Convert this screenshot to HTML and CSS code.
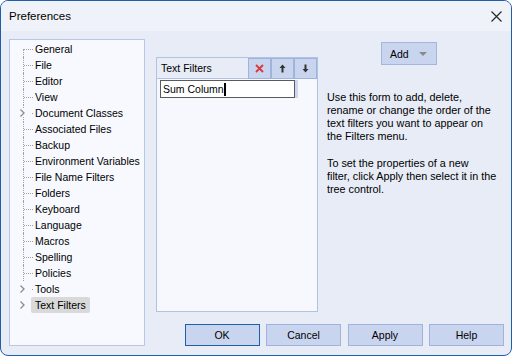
FILE: index.html
```html
<!DOCTYPE html>
<html lang="en">
<head>
    <meta charset="UTF-8">
    <title>Preferences</title>
    <link rel="stylesheet" href="styles.css">
</head>
<body>
    <div class="window">
        <div class="titlebar">
            <span class="title">Preferences</span>
            <span class="close">
                <svg width="11" height="11" viewBox="0 0 11 11"><path d="M0.5 0.5 L10.5 10.5 M10.5 0.5 L0.5 10.5" stroke="#222" stroke-width="1.1" fill="none"/></svg>
            </span>
        </div>
        <div class="content">
            <div class="tree">
                <div class="node first"><span class="guide"><span class="vline"></span><span class="hline"></span></span><span class="label">General</span></div>
                <div class="node"><span class="guide"><span class="vline"></span><span class="hline"></span></span><span class="label">File</span></div>
                <div class="node"><span class="guide"><span class="vline"></span><span class="hline"></span></span><span class="label">Editor</span></div>
                <div class="node"><span class="guide"><span class="vline"></span><span class="hline"></span></span><span class="label">View</span></div>
                <div class="node"><span class="guide">
                    <svg width="23" height="16" viewBox="0 0 23 16"><path d="M13.5 0 V4 M13.5 12 V16" stroke="#a0a0a0" stroke-dasharray="1 1" fill="none"/><path d="M10.5 4.5 L14 8 L10.5 11.5" stroke="#8c8c8c" stroke-width="1.3" fill="none"/><rect x="22" y="8" width="1" height="1" fill="#a0a0a0"/></svg>
                </span><span class="label">Document Classes</span></div>
                <div class="node"><span class="guide"><span class="vline"></span><span class="hline"></span></span><span class="label">Associated Files</span></div>
                <div class="node"><span class="guide"><span class="vline"></span><span class="hline"></span></span><span class="label">Backup</span></div>
                <div class="node"><span class="guide"><span class="vline"></span><span class="hline"></span></span><span class="label">Environment Variables</span></div>
                <div class="node"><span class="guide"><span class="vline"></span><span class="hline"></span></span><span class="label">File Name Filters</span></div>
                <div class="node"><span class="guide"><span class="vline"></span><span class="hline"></span></span><span class="label">Folders</span></div>
                <div class="node"><span class="guide"><span class="vline"></span><span class="hline"></span></span><span class="label">Keyboard</span></div>
                <div class="node"><span class="guide"><span class="vline"></span><span class="hline"></span></span><span class="label">Language</span></div>
                <div class="node"><span class="guide"><span class="vline"></span><span class="hline"></span></span><span class="label">Macros</span></div>
                <div class="node"><span class="guide"><span class="vline"></span><span class="hline"></span></span><span class="label">Spelling</span></div>
                <div class="node"><span class="guide"><span class="vline"></span><span class="hline"></span></span><span class="label">Policies</span></div>
                <div class="node"><span class="guide">
                    <svg width="23" height="16" viewBox="0 0 23 16"><path d="M10.5 4.5 L14 8 L10.5 11.5" stroke="#8c8c8c" stroke-width="1.3" fill="none"/><rect x="22" y="8" width="1" height="1" fill="#a0a0a0"/></svg>
                </span><span class="label">Tools</span></div>
                <div class="node"><span class="guide">
                    <svg width="23" height="16" viewBox="0 0 23 16"><path d="M10.5 4.5 L14 8 L10.5 11.5" stroke="#8c8c8c" stroke-width="1.3" fill="none"/></svg>
                </span><span class="label selected">Text Filters</span></div>
            </div>

            <div class="main">
                <div class="upper">
                    <div class="list-panel">
                        <div class="list-head">
                            <span class="list-title">Text Filters</span>
                            <span class="tool">
                                <svg width="9" height="9" viewBox="0 0 9 9"><path d="M1 1 L8 8 M8 1 L1 8" stroke="#d83a3a" stroke-width="1.8" fill="none"/></svg>
                            </span>
                            <span class="tool">
                                <svg width="7" height="9" viewBox="0 0 7 9"><path d="M3.5 0.5 L6.5 4 H4.5 V8.5 H2.5 V4 H0.5 Z" fill="#333"/></svg>
                            </span>
                            <span class="tool">
                                <svg width="7" height="9" viewBox="0 0 7 9"><path d="M3.5 8.5 L6.5 5 H4.5 V0.5 H2.5 V5 H0.5 Z" fill="#333"/></svg>
                            </span>
                        </div>
                        <div class="list-body">
                            <div class="item">
                                <div class="edit">Sum Column<span class="caret"></span></div>
                            </div>
                        </div>
                    </div>
                    <div class="side">
                        <div class="add">
                            <span>Add</span>
                            <svg width="8" height="4" viewBox="0 0 8 4"><path d="M0 0 H8 L4 4 Z" fill="#8a8a8a"/></svg>
                        </div>
                        <p class="help">Use this form to add, delete,<br>rename or change the order of the<br>text filters you want to appear on<br>the Filters menu.</p>
                        <p class="help second">To set the properties of a new<br>filter, click Apply then select it in the<br>tree control.</p>
                    </div>
                </div>
                <div class="buttons">
                    <button class="btn default">OK</button>
                    <button class="btn">Cancel</button>
                    <button class="btn">Apply</button>
                    <button class="btn">Help</button>
                </div>
            </div>
        </div>
    </div>
</body>
</html>
```

FILE: styles.css
```css
html, body {
    margin: 0;
    padding: 0;
    background-color: #fff;
}
body {
    font-family: "Liberation Sans", Arial, sans-serif;
    font-size: 10.5px;
    color: #000;
}
.window {
    width: 512px;
    height: 356px;
    box-sizing: border-box;
    border: 1px solid #1f5fa6;
    border-radius: 8px;
    background-color: #e7ecf6;
    display: flex;
    flex-direction: column;
    overflow: hidden;
}
.titlebar {
    height: 30px;
    flex: none;
    display: flex;
    align-items: center;
    padding-left: 8px;
    background-color: #eff3f9;
}
.title {
    font-size: 11.5px;
}
.close {
    margin-left: auto;
    margin-right: 9px;
    display: flex;
}
.content {
    flex: 1;
    display: flex;
    padding: 8px 7px 9px 8px;
    min-height: 0;
}

/* tree */
.tree {
    width: 136px;
    flex: none;
    box-sizing: border-box;
    border: 1px solid #b9c7e6;
    background-color: #f7f9fe;
    padding-top: 1px;
}
.node {
    display: flex;
    align-items: center;
    height: 16px;
}
.guide {
    width: 23px;
    height: 16px;
    flex: none;
    display: flex;
}
.vline {
    margin-left: 13px;
    width: 0;
    height: 16px;
    border-left: 1px dotted #a0a0a0;
}
.first .vline {
    height: 8px;
    align-self: flex-end;
}
.hline {
    width: 9px;
    height: 0;
    margin-top: 8px;
    border-top: 1px dotted #a0a0a0;
}
.label {
    padding: 0 4px 0 2px;
    line-height: 16px;
    white-space: nowrap;
}
.label.selected {
    margin-left: -2px;
    padding-left: 4px;
    background-color: #d9d9d9;
    border-radius: 2px;
}

/* right side */
.main {
    flex: 1;
    margin-left: 11px;
    display: flex;
    flex-direction: column;
}
.upper {
    flex: 1;
    display: flex;
}
.list-panel {
    margin-top: 18px;
    width: 162px;
    height: 255px;
    box-sizing: border-box;
    border: 1px solid #b4c2e2;
    background-color: #f6f8fe;
}
.list-head {
    display: flex;
    height: 21px;
    box-sizing: border-box;
    border-bottom: 1px solid #b4c2e2;
    background-color: #e7ecf6;
}
.list-title {
    flex: 1;
    padding-left: 4px;
    line-height: 20px;
}
.tool {
    width: 23px;
    height: 21px;
    box-sizing: border-box;
    border: 1px solid #9fb3dc;
    background-color: #c9d4ef;
    display: flex;
    align-items: center;
    justify-content: center;
}
.list-body {
    padding: 1px 0 0 3px;
}
.item {
    width: 138px;
    height: 18px;
    background-color: #cdd7ef;
}
.edit {
    width: 135px;
    height: 18px;
    box-sizing: border-box;
    border: 1px solid #5a5a5a;
    background-color: #fff;
    padding-left: 2px;
    line-height: 16px;
    white-space: nowrap;
}
.caret {
    display: inline-block;
    width: 2px;
    height: 13px;
    background-color: #000;
    vertical-align: -3px;
}
.side {
    flex: 1;
    margin-left: 9px;
}
.add {
    margin: 3px 0 0 54px;
    width: 56px;
    height: 23px;
    box-sizing: border-box;
    border: 1px solid #a5b6dc;
    background-color: #c9d4ef;
    display: flex;
    align-items: center;
    padding-left: 8px;
    gap: 10px;
}
.help {
    margin: 26px 0 0;
    font-size: 10.8px;
    line-height: 13px;
    white-space: nowrap;
}
.help.second {
    margin-top: 14px;
}
.buttons {
    display: flex;
    justify-content: flex-end;
    gap: 6.5px;
}
.btn {
    width: 75px;
    height: 22px;
    box-sizing: border-box;
    border: 1px solid #9fb3dc;
    background-color: #c9d4ef;
    font-family: "Liberation Sans", Arial, sans-serif;
    font-size: 10.5px;
    color: #000;
    padding: 0;
}
.btn.default {
    border-color: #1f5fa6;
}
```
